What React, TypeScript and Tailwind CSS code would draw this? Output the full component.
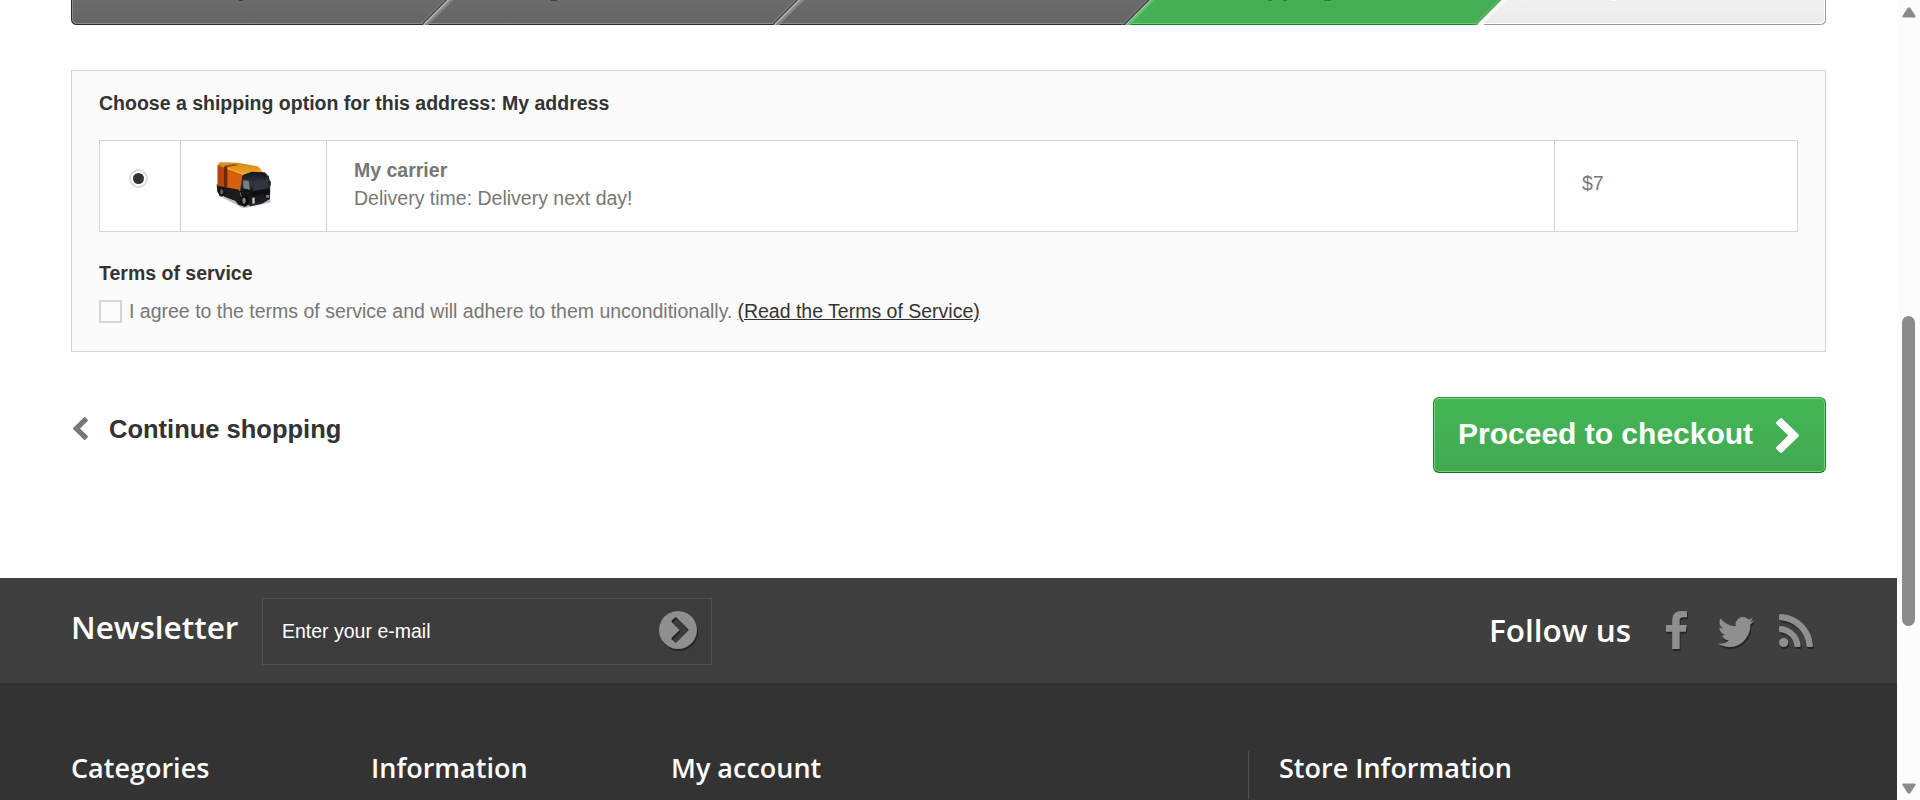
import React from "react";

const ARIAL = "font-['Liberation_Sans',Arial,sans-serif]";
const OPEN = "font-['Open_Sans',sans-serif]";

function Glyph({ d, box, className }: { d: string; box: string; className: string }) {
  return (
    <svg viewBox={box} className={className} fill="currentColor" preserveAspectRatio="none" aria-hidden="true">
      <path d={d} />
    </svg>
  );
}

const CHEVRON_RIGHT =
  "M1363 877l-742 742q-19 19-45 19t-45-19l-166-166q-19-19-19-45t19-45l531-531-531-531q-19-19-19-45t19-45l166-166q19-19 45-19t45 19l742 742q19 19 19 45t-19 45z";
const CHEVRON_LEFT =
  "M1427 301l-531 531 531 531q19 19 19 45t-19 45l-166 166q-19 19-45 19t-45-19l-742-742q-19-19-19-45t19-45l742-742q19-19 45-19t45 19l166 166q19 19 19 45t-19 45z";
const CIRCLE_RIGHT =
  "M845 1395l454-454q19-19 19-45t-19-45l-454-454q-19-19-45-19t-45 19l-102 102q-19 19-19 45t19 45l307 307-307 307q-19 19-19 45t19 45l102 102q19 19 45 19t45-19zm819-499q0 209-103 385.5t-279.5 279.5-385.5 103-385.5-103-279.5-279.5-103-385.5 103-385.5 279.5-279.5 385.5-103 385.5 103 279.5 279.5 103 385.5z";
const FACEBOOK =
  "M1343 12v264h-157q-86 0-116 36t-30 108v189h293l-39 296h-254v759h-306v-759h-255v-296h255v-218q0-186 104-288.5t277-102.5q147 0 228 12z";
const TWITTER =
  "M1684 408q-67 98-162 167 1 14 1 42 0 130-38 259.5t-115.5 248.5-184.5 210.5-258 146-323 54.5q-271 0-496-145 35 4 78 4 225 0 401-138-105-2-188-64.5t-114-159.5q33 5 61 5 43 0 85-11-112-23-185.5-111.5t-73.5-205.5v-4q68 38 146 41-66-44-105-115t-39-154q0-88 44-163 121 149 294.5 238.5t371.5 99.5q-8-38-8-74 0-134 94.5-228.5t228.5-94.5q140 0 236 102 109-21 205-78-37 115-142 178 93-10 186-50z";
const RSS =
  "M576 1344q0 80-56 136t-136 56-136-56-56-136 56-136 136-56 136 56 56 136zm512 123q2 28-17 48-18 21-47 21h-135q-25 0-43-16.5t-20-41.5q-22-229-184.5-391.5t-391.5-184.5q-25-2-41.5-20t-16.5-43v-135q0-29 21-47 17-17 43-17h5q160 13 306 80.5t259 181.5q114 113 181.5 259t80.5 306zm512 2q2 27-18 47-18 20-46 20h-143q-26 0-44.5-17.5t-19.5-42.5q-12-215-101-408.5t-231.5-336-336-231.5-408.5-102q-25-1-42.5-19.5t-17.5-43.5v-143q0-28 20-46 18-18 44-18h3q262 13 501.5 120t425.5 294q187 186 294 425.5t120 501.5z";

function StepBar() {
  return (
    <svg width="1755" height="25" viewBox="0 0 1755 25" className="block" aria-hidden="true">
      <defs>
        <linearGradient id="dark" x1="0" y1="0" x2="0" y2="1">
          <stop offset="0" stopColor="#6b6b6b" />
          <stop offset="1" stopColor="#656565" />
        </linearGradient>
        <linearGradient id="light" x1="0" y1="0" x2="0" y2="1">
          <stop offset="0" stopColor="#f1f1f1" />
          <stop offset="1" stopColor="#ebebeb" />
        </linearGradient>
        <clipPath id="bar">
          <path d="M0 0H1755V19Q1755 25 1749 25H6Q0 25 0 19Z" />
        </clipPath>
      </defs>
      <g clipPath="url(#bar)">
        <rect width="1755" height="25" fill="url(#dark)" />
        <path d="M0.5 0V19Q0.5 24.5 6 24.5H1060" fill="none" stroke="#2c292b" />
        <path d="M1.5 0V18.5Q1.5 23.5 6.5 23.5H1060" fill="none" stroke="#8e8e8e" />
        {[351, 702].map((x) => (
          <g key={x} fill="none">
            <path d={`M${x - 2} 24L${x + 23} -1`} stroke="#7a7a7a" />
            <path d={`M${x} 25L${x + 26} -1`} stroke="#484848" strokeWidth="1.5" />
            <path d={`M${x + 1.8} 25L${x + 27.8} -1`} stroke="#b5b5b5" strokeWidth="2" />
            <path d={`M${x + 4.5} 25L${x + 30.5} -1`} stroke="#858585" strokeWidth="2.5" />
          </g>
        ))}
        <g transform="translate(-2 0)">
          <path d="M1056 25L1082 -1H1434L1408 25Z" fill="#45af55" />
          <path d="M1057 24.5H1408" stroke="#1f7a2f" />
          <path d="M1057 23.5H1409" stroke="#74c776" />
          <path d="M1052.5 25L1078.5 -1" stroke="#858585" />
          <path d="M1055 25L1081 -1" stroke="#444444" strokeWidth="1.5" />
          <path d="M1057 25L1083 -1" stroke="#a5c8a6" strokeWidth="1.6" />
          <path d="M1059.3 25L1085.3 -1" stroke="#62c068" strokeWidth="2.6" />
          <path d="M1408 25L1434 -1H1760V25Z" fill="url(#light)" />
          <path d="M1404.5 25L1430.5 -1" stroke="#66bf6c" />
          <path d="M1407 25L1433 -1" stroke="#5da367" strokeWidth="1.5" />
          <path d="M1410 25L1436 -1" stroke="#fafafa" strokeWidth="3.5" />
        </g>
        <path d="M1413 24.5H1749Q1754.5 24.5 1754.5 19V0" fill="none" stroke="#9b9b9b" />
        <path d="M1411 23.5H1748Q1753.5 23.5 1753.5 18V0" fill="none" stroke="#ffffff" />
        <path d="M168 0H172" stroke="#3f3f3f" strokeWidth="2" />
        <path d="M480 0H486" stroke="#3f3f3f" strokeWidth="2" />
        <path d="M1197 0H1201M1212 0H1216M1253 0H1260" stroke="#208931" strokeWidth="2" />
        <path d="M1540 0H1545" stroke="#ffffff" strokeWidth="2" />
      </g>
    </svg>
  );
}

function Truck() {
  return (
    <svg viewBox="66 36 192 168" className="h-[56px] w-[64px]" aria-hidden="true">
      <defs>
        <linearGradient id="side" x1="0" y1="0" x2="1" y2="1">
          <stop offset="0" stopColor="#cf5a0c" />
          <stop offset="1" stopColor="#d96208" />
        </linearGradient>
        <linearGradient id="roof" x1="0" y1="0" x2="0" y2="1">
          <stop offset="0" stopColor="#d08a1c" />
          <stop offset="1" stopColor="#f7a11a" />
        </linearGradient>
        <linearGradient id="cab" x1="0" y1="0" x2="0" y2="1">
          <stop offset="0" stopColor="#15161a" />
          <stop offset="0.35" stopColor="#34383f" />
          <stop offset="0.55" stopColor="#111216" />
          <stop offset="1" stopColor="#24262a" />
        </linearGradient>
        <filter id="soft" x="-10%" y="-10%" width="120%" height="120%">
          <feGaussianBlur stdDeviation="2" />
        </filter>
      </defs>
      <g filter="url(#soft)">
        <path d="M82 150L160 190L243 172L238 158L160 176Z" fill="#bdbdbd" />
        <path d="M80 118L148 132L160 184L146 180L136 168L104 156L82 142Z" fill="#1b1c1f" />
        <path d="M83 60L112 66L156 78V136L83 122Z" fill="url(#side)" />
        <path d="M83 60L104 64V126L83 122Z" fill="#b84409" />
        <path d="M83 60L90 52L142 53L204 64L218 80L160 90L112 72Z" fill="url(#roof)" />
        <path d="M104 68L112 66L146 60L132 58L102 63Z" fill="#8a4a0c" />
        <path d="M102 66H112V128L102 126Z" fill="#6a2c0a" />
        <path d="M112 70L156 86L214 78" fill="none" stroke="#ffc04a" strokeWidth="2" />
        <path d="M157 90L186 80L224 82L236 94L241 112L240 162L216 176L182 184L160 172L150 140Z" fill="url(#cab)" />
        <path d="M160 106L176 108L180 134L160 130Z" fill="#75818b" />
        <path d="M188 108L234 104L236 128L190 138Z" fill="#30353c" />
        <path d="M184 144L239 134V142L186 154Z" fill="#08090b" />
        <ellipse cx="95" cy="140" rx="10" ry="15" fill="#121212" />
        <ellipse cx="95" cy="140" rx="4" ry="8" fill="#6b6b6b" />
        <ellipse cx="164" cy="167" rx="13" ry="18" fill="#0d0d0f" />
        <ellipse cx="162" cy="167" rx="5" ry="9" fill="#858585" />
        <path d="M187 158H194V176H187Z" fill="#c9c9bd" />
        <path d="M228 150H238V158H228Z" fill="#74777b" />
        <path d="M236 108H242V122H236Z" fill="#17181b" />
      </g>
    </svg>
  );
}

function CarrierTable() {
  return (
    <div className="mt-[23px] grid h-[92px] w-[1699px] grid-cols-[81px_146px_1228px_1fr] divide-x divide-[#d0d0d0] border border-[#d6d4d4] bg-white">
      <div className="flex justify-center pt-[28px]">
        <div className="mr-[4px] flex h-[19px] w-[19px] items-center justify-center rounded-full border-2 border-[#dcdcdc] bg-white">
          <div className="h-[11px] w-[11px] rounded-full bg-[#333]" />
        </div>
      </div>
      <div className="pl-[31px] pt-[16px]"><Truck /></div>
      <div className="pl-[27px] pt-[15px] text-[19.5px] leading-[28px] text-[#777]">
        <strong className="block">My carrier</strong>
        <span className="block">Delivery time: Delivery next day!</span>
      </div>
      <div className="pl-[27px] pt-[29px] text-[19.5px] leading-[27px] text-[#777]">$7</div>
    </div>
  );
}

function Newsletter() {
  return (
    <section className={`flex h-[105px] bg-[#3f3f3f] pl-[71px] pr-[84px] text-white ${OPEN}`}>
      <h4 className="w-[191px] pt-[29px] text-[31.5px] font-semibold leading-[40px]">Newsletter</h4>
      <div className="mt-[20px] flex h-[67px] w-[450px] items-center justify-between border border-[#515151] bg-[#3c3c3c] pl-[19px] pr-[14px]">
        <span className={`text-[19.5px] leading-[27px] ${ARIAL}`}>Enter your e-mail</span>
        <Glyph d={CIRCLE_RIGHT} box="128 128 1536 1536" className="mb-[3px] h-[38px] w-[38px] text-[#908f8f] drop-shadow-[1px_2px_0_rgba(0,0,0,0.4)]" />
      </div>
      <div className="ml-auto flex">
        <h4 className="pt-[32px] text-[31.5px] font-semibold leading-[40px]">Follow us</h4>
        <Glyph d={FACEBOOK} box="479 0 864 1664" className="ml-[35px] mt-[33px] h-[38px] w-[21px] text-[#908f8f] drop-shadow-[1px_2px_0_rgba(0,0,0,0.4)]" />
        <Glyph d={TWITTER} box="108 256 1576 1280" className="ml-[31px] mt-[39px] h-[30px] w-[36px] text-[#908f8f] drop-shadow-[1px_2px_0_rgba(0,0,0,0.4)]" />
        <Glyph d={RSS} box="192 128 1408 1408" className="ml-[25px] mt-[36px] h-[33px] w-[34px] text-[#908f8f] drop-shadow-[1px_2px_0_rgba(0,0,0,0.4)]" />
      </div>
    </section>
  );
}

function FooterColumns() {
  return (
    <section className={`flex h-[117px] border-b border-[#3d3038] bg-[#333] pl-[71px] text-[27px] font-semibold leading-[34px] text-white ${OPEN}`}>
      <h4 className="w-[300px] pt-[68px]">Categories</h4>
      <h4 className="w-[300px] pt-[68px]">Information</h4>
      <h4 className="w-[577px] pt-[68px]">My account</h4>
      <div className="mt-[68px] flex-1 border-l border-[#515151] pl-[30px]">
        <h4>Store Information</h4>
      </div>
    </section>
  );
}

function Scrollbar() {
  return (
    <div className="flex h-[800px] w-[23px] flex-col items-center bg-[#fcfcfc]">
      <svg width="14" height="11" viewBox="0 0 14 11" className="mt-[7px]" aria-hidden="true">
        <path d="M5.6 1Q7 -.6 8.4 1L13.4 8.8Q14.2 10.6 12.4 10.6H1.6Q-.2 10.6 .6 8.8Z" fill="#8b8b8b" />
      </svg>
      <div className="mt-[298px] h-[310px] w-[13px] rounded-full bg-[#8b8b8b]" />
      <svg width="14" height="11" viewBox="0 0 14 11" className="mt-[157px]" aria-hidden="true">
        <path d="M5.6 10Q7 11.6 8.4 10L13.4 2.2Q14.2 .4 12.4 .4H1.6Q-.2 .4 .6 2.2Z" fill="#8b8b8b" />
      </svg>
    </div>
  );
}

export default function App() {
  return (
    <div className={`flex h-[800px] w-[1920px] overflow-hidden bg-white ${ARIAL}`}>
      <div className="flex w-[1897px] flex-col">
        <main className="h-[578px] pl-[71px]">
          <StepBar />
          <section className="mt-[45px] h-[282px] w-[1755px] border border-[#d6d4d4] bg-[#fbfbfb] px-[27px] pt-[19px]">
            <p className="text-[19.5px] font-bold leading-[27px] text-[#333]">Choose a shipping option for this address: My address</p>
            <CarrierTable />
            <p className="mt-[28px] text-[19.5px] font-bold leading-[27px] text-[#333]">Terms of service</p>
            <div className="mt-[13px] flex items-start text-[19.5px] leading-[23px] text-[#777]">
              <div className="mr-[7px] h-[23px] w-[23px] border-2 border-[#d6d4d4] bg-[#fcfcfc]" />
              <span>I agree to the terms of service and will adhere to them unconditionally.</span>
              <a className="ml-[5px] text-[#333] underline">(Read the Terms of Service)</a>
            </div>
          </section>
          <div className="flex w-[1755px] justify-between pt-[45px]">
            <a className="flex h-[60px] items-center pt-[4px] text-[25.5px] font-bold text-[#333]">
              <Glyph d={CHEVRON_LEFT} box="410 26 1036 1612" className="ml-[2px] mr-[21px] mt-[-2px] h-[23px] w-[15px] text-[#777]" />
              Continue shopping
            </a>
            <button className="flex h-[76px] w-[393px] rounded-[6px] border border-t-[#399a49] border-x-[#247f32] border-b-[#166d23] bg-linear-to-b from-[#43b754] to-[#42a852] pl-[24px] pt-[18px] text-[30px] font-bold leading-[36px] text-white shadow-[inset_0_0_0_1px_#74d578]">
              Proceed to checkout
              <Glyph d={CHEVRON_RIGHT} box="346 26 1036 1612" className="ml-[23px] mt-[2px] h-[35px] w-[23px] text-white" />
            </button>
          </div>
        </main>
        <Newsletter />
        <FooterColumns />
      </div>
      <Scrollbar />
    </div>
  );
}
